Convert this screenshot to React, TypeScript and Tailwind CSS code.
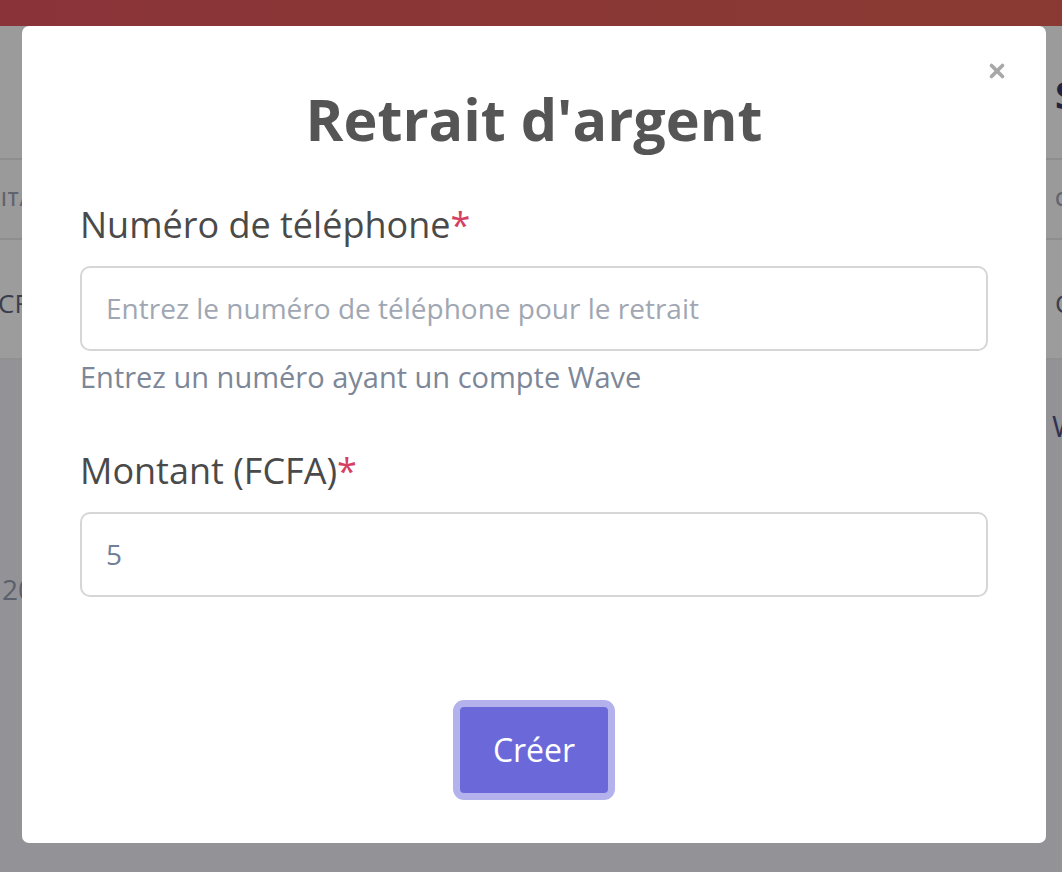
import { X } from "lucide-react";

function BackgroundPage() {
  return (
    <div className="flex flex-col h-full whitespace-nowrap">
      {/* top brand bar */}
      <div className="h-[26px] flex-shrink-0 bg-gradient-to-r from-[#8a3439] to-[#8a3a32]" />

      {/* page header */}
      <div className="h-[132px] flex-shrink-0 bg-[#9b9b9b] grid grid-cols-[1055px_1fr] items-center">
        <span />
        <span className="text-[38px] font-bold text-[#1f2540] mb-[-4px]">Solde</span>
      </div>

      {/* table head */}
      <div className="h-[82px] flex-shrink-0 grid grid-cols-[1055px_1fr] items-center bg-[#9a9a9a] border-y-2 border-[#8e8e8e] text-[19px] font-semibold tracking-wider text-[#60646e]">
        <span className="ml-[1px]">ITAL</span>
        <span>COMPTE</span>
      </div>

      {/* table row */}
      <div className="h-[120px] flex-shrink-0 grid grid-cols-[1055px_1fr] items-center bg-[#9c9c9c] border-b-2 border-[#919191] text-[26px] text-[#3a3e4c]">
        <span className="ml-[-2px] mt-[8px]">CFA</span>
        <span className="mt-[8px]">Compte</span>
      </div>

      {/* lower area */}
      <div className="flex-1 bg-[#939297] grid grid-cols-[1052px_1fr] grid-rows-[88px_1fr] text-[#2f3350]">
        <span />
        <span className="self-end text-[30px]">Wave</span>
        <span className="mt-[120px] ml-[2px] text-[28px] text-[#5b606c]">2024</span>
        <span />
      </div>
    </div>
  );
}

export default function App() {
  return (
    <div className="relative w-[1062px] h-[872px] overflow-hidden bg-[#939297] font-['Open_Sans',_'Noto_Sans',_sans-serif]">
      <BackgroundPage />

      {/* Modal */}
      <div className="absolute left-[22px] top-[26px] w-[1024px] h-[817px] bg-white rounded-[7px] px-[58px]">
        <button className="absolute right-[38px] top-[34px] text-[#a8a8a8]">
          <X size={22} strokeWidth={4} />
        </button>

        <h1 className="text-center text-[57.5px] font-bold text-[#555555] leading-none pt-[65px]">
          Retrait d'argent
        </h1>

        <label className="block mt-[54px] text-[36px] leading-[44px] text-[#4a4a4a]">
          Numéro de téléphone<span className="text-[#d53f63]">*</span>
        </label>
        <input
          placeholder="Entrez le numéro de téléphone pour le retrait"
          className="mt-[19px] w-full h-[85px] rounded-[10px] border-2 border-[#d6d6d6] px-[24px] text-[28px] text-[#718096] placeholder:text-[#a0a7b2] outline-none"
        />
        <p className="mt-[8px] text-[29px] leading-[36px] text-[#7d8797]">
          Entrez un numéro ayant un compte Wave
        </p>

        <label className="block mt-[54px] text-[36px] leading-[44px] text-[#4a4a4a]">
          Montant (FCFA)<span className="text-[#d53f63]">*</span>
        </label>
        <input
          defaultValue="5"
          className="mt-[19px] w-full h-[85px] rounded-[10px] border-2 border-[#d6d6d6] px-[24px] text-[28px] text-[#718096] outline-none"
        />

        <div className="flex justify-center mt-[103px]">
          <button className="w-[162px] h-[100px] rounded-[11px] bg-[#6b69da] border-[7px] border-[#b4b2ec] text-white text-[32px]">
            Créer
          </button>
        </div>
      </div>
    </div>
  );
}
